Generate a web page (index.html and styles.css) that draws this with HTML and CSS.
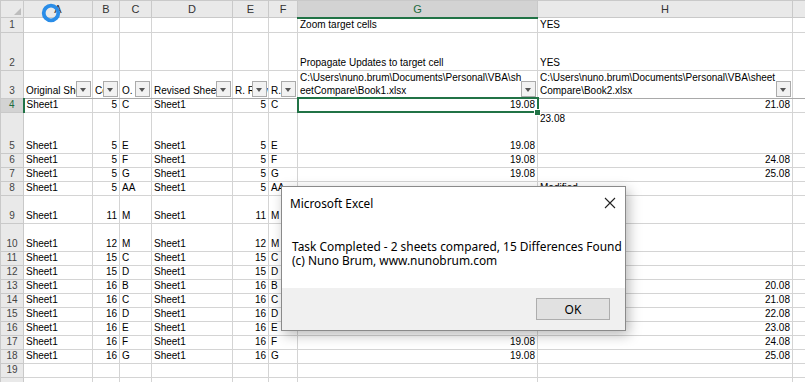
FILE: index.html
```html
<!DOCTYPE html>
<html>
<head>
<meta charset="utf-8">
<link rel="stylesheet" href="styles.css">
</head>
<body>
<div class="sheet">
    <table class="grid">
        <colgroup>
            <col class="c-hd"><col class="c-a"><col class="c-b"><col class="c-c"><col class="c-d">
            <col class="c-e"><col class="c-f"><col class="c-g"><col class="c-h"><col class="c-i">
        </colgroup>
        <tr class="hdr">
            <th class="corner"><span class="tri"></span></th>
            <th>A</th><th>B</th><th>C</th><th>D</th><th>E</th><th>F</th><th class="sel">G</th><th>H</th><th></th>
        </tr>
        <tr class="h14"><th>1</th><td></td><td></td><td></td><td></td><td></td><td></td><td>Zoom target cells</td><td>YES</td><td></td></tr>
        <tr class="h38"><th>2</th><td></td><td></td><td></td><td></td><td></td><td></td><td>Propagate Updates to target cell</td><td>YES</td><td></td></tr>
        <tr class="h28 head">
            <th>3</th>
            <td>Original Sheet<span class="flt"></span></td>
            <td>Cell<span class="flt"></span></td>
            <td>O.<span class="flt"></span></td>
            <td>Revised Sheet<span class="flt"></span></td>
            <td>R. Row<span class="flt"></span></td>
            <td>R.<span class="flt"></span></td>
            <td>C:\Users\nuno.brum\Documents\Personal\VBA\sh<br>eetCompare\Book1.xlsx<span class="flt"></span></td>
            <td>C:\Users\nuno.brum\Documents\Personal\VBA\sheet<br>Compare\Book2.xlsx<span class="flt"></span></td>
            <td></td>
        </tr>
        <tr class="h14"><th class="sel">4</th><td>Sheet1</td><td class="n">5</td><td>C</td><td>Sheet1</td><td class="n">5</td><td>C</td><td class="n active">19.08</td><td class="n">21.08</td><td></td></tr>
        <tr class="h41"><th>5</th><td>Sheet1</td><td class="n">5</td><td>E</td><td>Sheet1</td><td class="n">5</td><td>E</td><td class="n">19.08</td><td class="top">23.08</td><td></td></tr>
        <tr class="h14"><th>6</th><td>Sheet1</td><td class="n">5</td><td>F</td><td>Sheet1</td><td class="n">5</td><td>F</td><td class="n">19.08</td><td class="n">24.08</td><td></td></tr>
        <tr class="h14"><th>7</th><td>Sheet1</td><td class="n">5</td><td>G</td><td>Sheet1</td><td class="n">5</td><td>G</td><td class="n">19.08</td><td class="n">25.08</td><td></td></tr>
        <tr class="h14"><th>8</th><td>Sheet1</td><td class="n">5</td><td>AA</td><td>Sheet1</td><td class="n">5</td><td>AA</td><td></td><td class="top">Modified</td><td></td></tr>
        <tr class="h28"><th>9</th><td>Sheet1</td><td class="n">11</td><td>M</td><td>Sheet1</td><td class="n">11</td><td>M</td><td></td><td></td><td></td></tr>
        <tr class="h28"><th>10</th><td>Sheet1</td><td class="n">12</td><td>M</td><td>Sheet1</td><td class="n">12</td><td>M</td><td></td><td></td><td></td></tr>
        <tr class="h14"><th>11</th><td>Sheet1</td><td class="n">15</td><td>C</td><td>Sheet1</td><td class="n">15</td><td>C</td><td></td><td></td><td></td></tr>
        <tr class="h14"><th>12</th><td>Sheet1</td><td class="n">15</td><td>D</td><td>Sheet1</td><td class="n">15</td><td>D</td><td></td><td></td><td></td></tr>
        <tr class="h14"><th>13</th><td>Sheet1</td><td class="n">16</td><td>B</td><td>Sheet1</td><td class="n">16</td><td>B</td><td></td><td class="n">20.08</td><td></td></tr>
        <tr class="h14"><th>14</th><td>Sheet1</td><td class="n">16</td><td>C</td><td>Sheet1</td><td class="n">16</td><td>C</td><td></td><td class="n">21.08</td><td></td></tr>
        <tr class="h14"><th>15</th><td>Sheet1</td><td class="n">16</td><td>D</td><td>Sheet1</td><td class="n">16</td><td>D</td><td></td><td class="n">22.08</td><td></td></tr>
        <tr class="h14"><th>16</th><td>Sheet1</td><td class="n">16</td><td>E</td><td>Sheet1</td><td class="n">16</td><td>E</td><td></td><td class="n">23.08</td><td></td></tr>
        <tr class="h14"><th>17</th><td>Sheet1</td><td class="n">16</td><td>F</td><td>Sheet1</td><td class="n">16</td><td>F</td><td class="n">19.08</td><td class="n">24.08</td><td></td></tr>
        <tr class="h14"><th>18</th><td>Sheet1</td><td class="n">16</td><td>G</td><td>Sheet1</td><td class="n">16</td><td>G</td><td class="n">19.08</td><td class="n">25.08</td><td></td></tr>
        <tr class="h14"><th>19</th><td></td><td></td><td></td><td></td><td></td><td></td><td></td><td></td><td></td></tr>
        <tr class="h14"><th></th><td></td><td></td><td></td><td></td><td></td><td></td><td></td><td></td><td></td></tr>
    </table>

    <svg class="busy" width="20" height="20" viewBox="0 0 20 20">
        <circle cx="10" cy="10" r="7.3" fill="none" stroke="#2a8de8" stroke-width="3.8"/>
    </svg>

    <div class="dialog">
        <div class="dlg-title">
            <span>Microsoft Excel</span>
            <svg class="dlg-close" width="12" height="12" viewBox="0 0 12 12">
                <path d="M1 1 L11 11 M11 1 L1 11" stroke="#222" stroke-width="1.1" fill="none"/>
            </svg>
        </div>
        <div class="dlg-body">
            <p>Task Completed - 2 sheets compared, 15 Differences Found</p>
            <p>(c) Nuno Brum, www.nunobrum.com</p>
        </div>
        <div class="dlg-foot">
            <button class="dlg-btn">OK</button>
        </div>
    </div>
</div>
</body>
</html>
```

FILE: styles.css
```css
body {
    margin: 0;
    background-color: #fff;
    overflow: hidden;
    font-family: "Liberation Sans", Arial, sans-serif;
    font-size: 10px;
    color: #000;
}

.sheet {
    position: relative;
    width: 805px;
    height: 382px;
    overflow: hidden;
}

.grid {
    border-collapse: collapse;
    table-layout: fixed;
    width: 805px;
}

.c-hd { width: 23px; }
.c-a { width: 69px; }
.c-b { width: 27px; }
.c-c { width: 32px; }
.c-d { width: 81px; }
.c-e { width: 36px; }
.c-f { width: 29px; }
.c-g { width: 240px; }
.c-h { width: 255px; }
.c-i { width: 13px; }

.grid td,
.grid th {
    box-sizing: border-box;
    border: 1px solid #d4d4d4;
    padding: 0 2px 1px 2px;
    line-height: 12px;
    white-space: nowrap;
    overflow: hidden;
    vertical-align: bottom;
    text-align: left;
    font-weight: normal;
    position: relative;
}

.grid th {
    background-color: #e9e9e9;
    color: #444;
    text-align: center;
    border-color: #c9c9c9;
    vertical-align: middle;
    padding: 0;
}

.grid .hdr th {
    height: 17px;
    font-size: 11px;
    color: #333;
}

.grid th.sel {
    background-color: #d3d3d3;
    color: #1d6b40;
}

.grid .hdr th.sel {
    border-bottom: 2px solid #217346;
}

.grid tr th.sel:first-child {
    border-right: 2px solid #217346;
}

.corner .tri {
    position: absolute;
    right: 2px;
    bottom: 2px;
    border-left: 7px solid transparent;
    border-bottom: 7px solid #bdbdbd;
}

.h14 td, .h14 th { height: 14px; }
.h28 td, .h28 th { height: 28px; }
.h38 td, .h38 th { height: 38px; }
.h41 td, .h41 th { height: 41px; }

.grid tr th:first-child {
    vertical-align: bottom;
    padding-bottom: 1px;
}

.grid .hdr th:first-child {
    vertical-align: middle;
}

.grid td.n {
    text-align: right;
}

.grid td.top {
    vertical-align: top;
}

.head td {
    line-height: 13px;
    border-bottom-color: #a9a9a9;
}

.flt {
    position: absolute;
    right: 1px;
    bottom: 1px;
    width: 15px;
    height: 16px;
    box-sizing: border-box;
    background-color: #f2f2f2;
    border: 1px solid #ababab;
}

.flt::after {
    content: "";
    position: absolute;
    left: 3px;
    top: 6px;
    border-left: 3.5px solid transparent;
    border-right: 3.5px solid transparent;
    border-top: 4px solid #555;
}

.grid td.active {
    overflow: visible;
    outline: 2px solid #217346;
    outline-offset: -1px;
}

.grid td.active::after {
    content: "";
    position: absolute;
    right: -4px;
    bottom: -4px;
    width: 5px;
    height: 5px;
    background-color: #217346;
    border: 1px solid #fff;
}

.busy {
    position: absolute;
    left: 41px;
    top: 3px;
}

.dialog {
    position: absolute;
    left: 281px;
    top: 186px;
    width: 345px;
    height: 145px;
    box-sizing: border-box;
    background-color: #fff;
    border: 1px solid #8a8a8a;
    box-shadow: 3px 4px 12px rgba(0,0,0,0.28);
    font-family: "Noto Sans", "Open Sans", sans-serif;
    font-size: 12px;
    display: flex;
    flex-direction: column;
}

.dlg-title {
    height: 31px;
    display: flex;
    align-items: center;
    justify-content: space-between;
    padding: 0 9px 0 8px;
    font-size: 11.8px;
}

.dlg-body {
    flex: 1;
    padding: 21px 0 0 10px;
}

.dlg-body p {
    margin: 0;
    line-height: 14px;
    font-size: 11.9px;
}

.dlg-foot {
    height: 42px;
    background-color: #f0f0f0;
    display: flex;
    justify-content: flex-end;
    align-items: flex-start;
    padding: 10px 15px 0 0;
    box-sizing: border-box;
}

.dlg-btn {
    width: 74px;
    height: 22px;
    background-color: #e1e1e1;
    border: 1px solid #adadad;
    font-family: "Noto Sans", "Open Sans", sans-serif;
    font-size: 12px;
    padding: 0;
}
```
